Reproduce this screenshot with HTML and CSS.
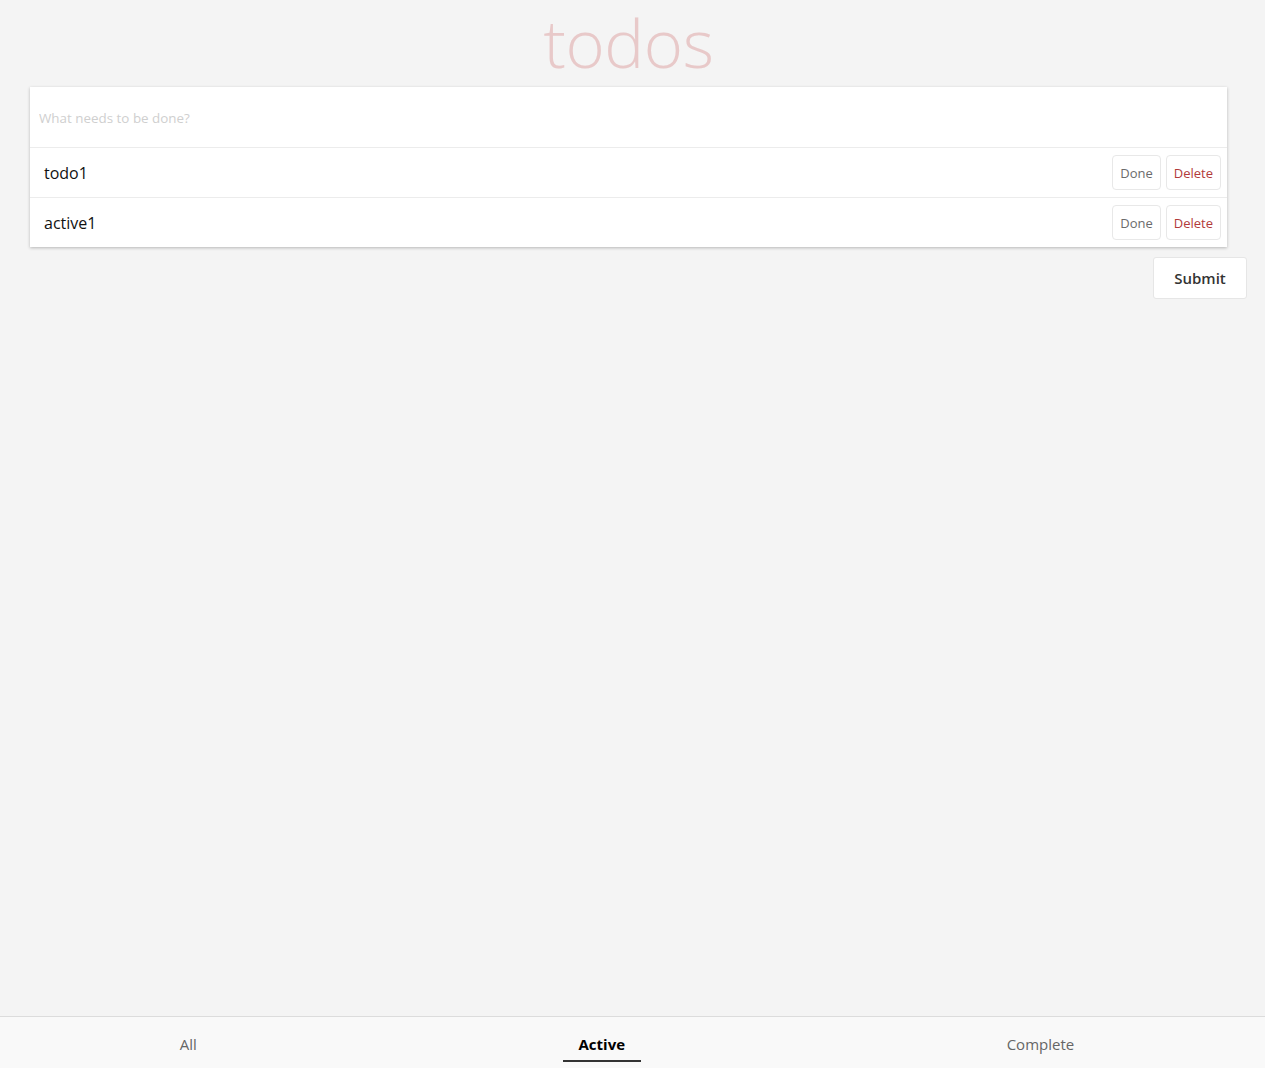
FILE: index.html
```html
<!DOCTYPE html>
<html lang="en">
<head>
<meta charset="utf-8">
<title>todos</title>
<link rel="stylesheet" href="styles.css">
</head>
<body>
<div class="page">
  <main class="main">
    <h1 class="title">todos</h1>
    <section class="card">
      <div class="new-row">
        <input class="new-todo" type="text" placeholder="What needs to be done?">
      </div>
      <ul class="list">
        <li class="item">
          <span class="label">todo1</span>
          <div class="actions">
            <button class="btn btn-done">Done</button>
            <button class="btn btn-delete">Delete</button>
          </div>
        </li>
        <li class="item">
          <span class="label">active1</span>
          <div class="actions">
            <button class="btn btn-done">Done</button>
            <button class="btn btn-delete">Delete</button>
          </div>
        </li>
      </ul>
    </section>
    <div class="submit-row">
      <button class="submit">Submit</button>
    </div>
  </main>
  <footer class="footer">
    <a class="tab">All</a>
    <a class="tab tab-active">Active</a>
    <a class="tab">Complete</a>
  </footer>
</div>
</body>
</html>
```

FILE: styles.css
```css
* { box-sizing: border-box; }
html, body { margin: 0; padding: 0; }
body {
  background: #f4f4f4;
  font-family: "Open Sans", "Noto Sans", "Liberation Sans", sans-serif;
  color: #111;
  overflow: hidden;
}
.page {
  min-height: 100vh;
  display: flex;
  flex-direction: column;
}
.main {
  flex: 1;
  padding: 0 18px 0 30px;
}
.title {
  margin: 0;
  width: 1197px;
  padding: 1px 0 4px;
  text-align: center;
  font-family: "Open Sans", "Noto Sans", sans-serif;
  font-weight: 300;
  font-size: 67px;
  line-height: 82px;
  color: #e8c9c9;
  letter-spacing: -0.4px;
}
.card {
  width: 1197px;
  background: #fff;
  box-shadow: 0 1px 3px rgba(0,0,0,0.25);
}
.new-row {
  height: 61px;
  display: flex;
  align-items: center;
  padding-top: 1px;
  border-bottom: 1px solid #ececec;
}
.new-todo {
  border: 0;
  outline: none;
  width: 100%;
  padding: 0 9px;
  font-family: inherit;
  font-size: 13.4px;
  background: transparent;
  color: #333;
}
.new-todo::placeholder { color: #cfcfcf; }
.list { list-style: none; margin: 0; padding: 0; }
.item {
  height: 50px;
  display: flex;
  align-items: center;
  justify-content: space-between;
  padding: 0 6px 0 14px;
  border-bottom: 1px solid #ececec;
}
.item:last-child { border-bottom: 0; height: 49px; }
.label {
  font-size: 16px;
  color: #111;
}
.actions { display: flex; gap: 5px; }
.btn {
  height: 35px;
  padding: 0 7px;
  background: #fff;
  border: 1px solid #e8e8e8;
  border-radius: 4px;
  font-family: inherit;
  font-size: 13px;
  cursor: pointer;
}
.btn-done { color: #6b6b6b; }
.btn-delete { color: #b23a3a; }
.submit-row {
  display: flex;
  justify-content: flex-end;
  padding-top: 10px;
}
.submit {
  width: 94px;
  height: 42px;
  background: #fff;
  border: 1px solid #e6e6e6;
  border-radius: 3px;
  font-family: inherit;
  font-size: 15px;
  font-weight: 600;
  color: #333;
}
.footer {
  height: 52px;
  margin-left: -11px;
  background: #f9f9f9;
  border-top: 1px solid #dcdcdc;
  display: flex;
  justify-content: space-around;
  align-items: stretch;
}
.tab {
  display: flex;
  align-items: center;
  padding: 10px 16px 0;
  font-size: 15px;
  color: #666;
  border-bottom: 2px solid transparent;
  margin-bottom: 6px;
  cursor: pointer;
}
.tab-active {
  color: #000;
  font-weight: 700;
  border-bottom-color: #333;
}
```
